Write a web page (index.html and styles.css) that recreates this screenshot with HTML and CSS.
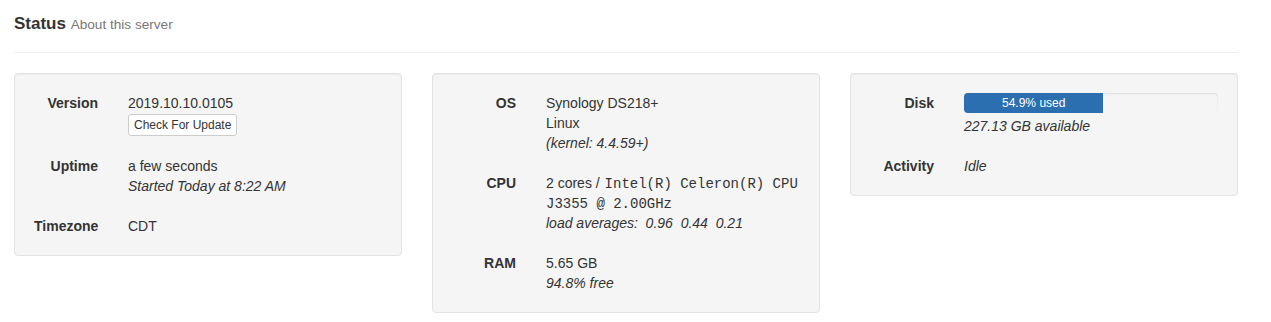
FILE: index.html
```html
<!DOCTYPE html>
<html lang="en">
<head>
    <meta charset="UTF-8">
    <title>Status</title>
    <link rel="stylesheet" href="styles.css">
</head>
<body>
    <div class="container">
        <div class="page-header">
            <h1>Status <small>About this server</small></h1>
        </div>

        <div class="row">
            <!-- Server -->
            <div class="well">
                <dl class="dl-horizontal">
                    <dt>Version</dt>
                    <dd>
                        2019.10.10.0105<br>
                        <button class="btn-xs" type="button">Check For Update</button>
                    </dd>
                    <dt>Uptime</dt>
                    <dd>
                        a few seconds<br>
                        <em>Started Today at 8:22 AM</em>
                    </dd>
                    <dt>Timezone</dt>
                    <dd>CDT</dd>
                </dl>
            </div>

            <!-- Host -->
            <div class="well">
                <dl class="dl-horizontal">
                    <dt>OS</dt>
                    <dd>
                        Synology DS218+<br>
                        Linux<br>
                        <em>(kernel: 4.4.59+)</em>
                    </dd>
                    <dt>CPU</dt>
                    <dd>
                        2 cores / <code>Intel(R) Celeron(R) CPU J3355 @ 2.00GHz</code><br>
                        <em class="loads">load averages:  0.96  0.44  0.21</em>
                    </dd>
                    <dt>RAM</dt>
                    <dd>
                        5.65 GB<br>
                        <em>94.8% free</em>
                    </dd>
                </dl>
            </div>

            <!-- Storage -->
            <div class="well">
                <dl class="dl-horizontal">
                    <dt>Disk</dt>
                    <dd>
                        <div class="progress">
                            <div class="progress-bar" style="width: 54.9%">54.9% used</div>
                        </div>
                        <em>227.13 GB available</em>
                    </dd>
                    <dt>Activity</dt>
                    <dd><em>Idle</em></dd>
                </dl>
            </div>
        </div>
    </div>
</body>
</html>
```

FILE: styles.css
```css
* {
    box-sizing: border-box;
}

body {
    margin: 0;
    font-family: 'Liberation Sans', Arial, sans-serif;
    font-size: 14px;
    line-height: 20px;
    color: #333;
    background: #fff;
}

.container {
    width: 1224px;
    margin-left: 14px;
}

.page-header {
    margin-top: 14px;
    padding-bottom: 18px;
    border-bottom: 1px solid #eee;
    margin-bottom: 20px;
}

h1 {
    margin: 0;
    font-size: 17px;
    font-weight: bold;
    line-height: 19px;
}

h1 small {
    font-size: 80%;
    font-weight: normal;
    color: #777;
}

.row {
    display: grid;
    grid-template-columns: repeat(3, 1fr);
    gap: 30px;
    align-items: start;
}

.well {
    background: #f5f5f5;
    border: 1px solid #e3e3e3;
    border-radius: 4px;
    box-shadow: inset 0 1px 1px rgba(0, 0, 0, 0.05);
    padding: 19px;
}

.dl-horizontal {
    margin: 0;
    display: grid;
    grid-template-columns: 64px 1fr;
    column-gap: 30px;
    row-gap: 20px;
}

.dl-horizontal dt {
    font-weight: bold;
    text-align: right;
    white-space: nowrap;
}

.dl-horizontal dd {
    margin: 0;
}

code {
    font-family: 'Liberation Mono', 'Courier New', monospace;
    font-size: 14px;
    line-height: 1;
    margin-left: 1px;
}

.loads {
    white-space: pre;
}

.btn-xs {
    display: inline-block;
    margin-top: 1px;
    padding: 1px 5px;
    font-family: inherit;
    font-size: 12px;
    line-height: 18px;
    color: #333;
    background: #fff;
    border: 1px solid #ccc;
    border-radius: 3px;
    vertical-align: top;
}

.progress {
    height: 20px;
    margin-bottom: 3px;
    background: #f5f5f5;
    border-radius: 4px;
    box-shadow: inset 0 1px 2px rgba(0, 0, 0, 0.1);
    overflow: hidden;
}

.progress-bar {
    height: 100%;
    background: #2b6fb0;
    color: #fff;
    font-size: 12px;
    line-height: 20px;
    text-align: center;
}
```
